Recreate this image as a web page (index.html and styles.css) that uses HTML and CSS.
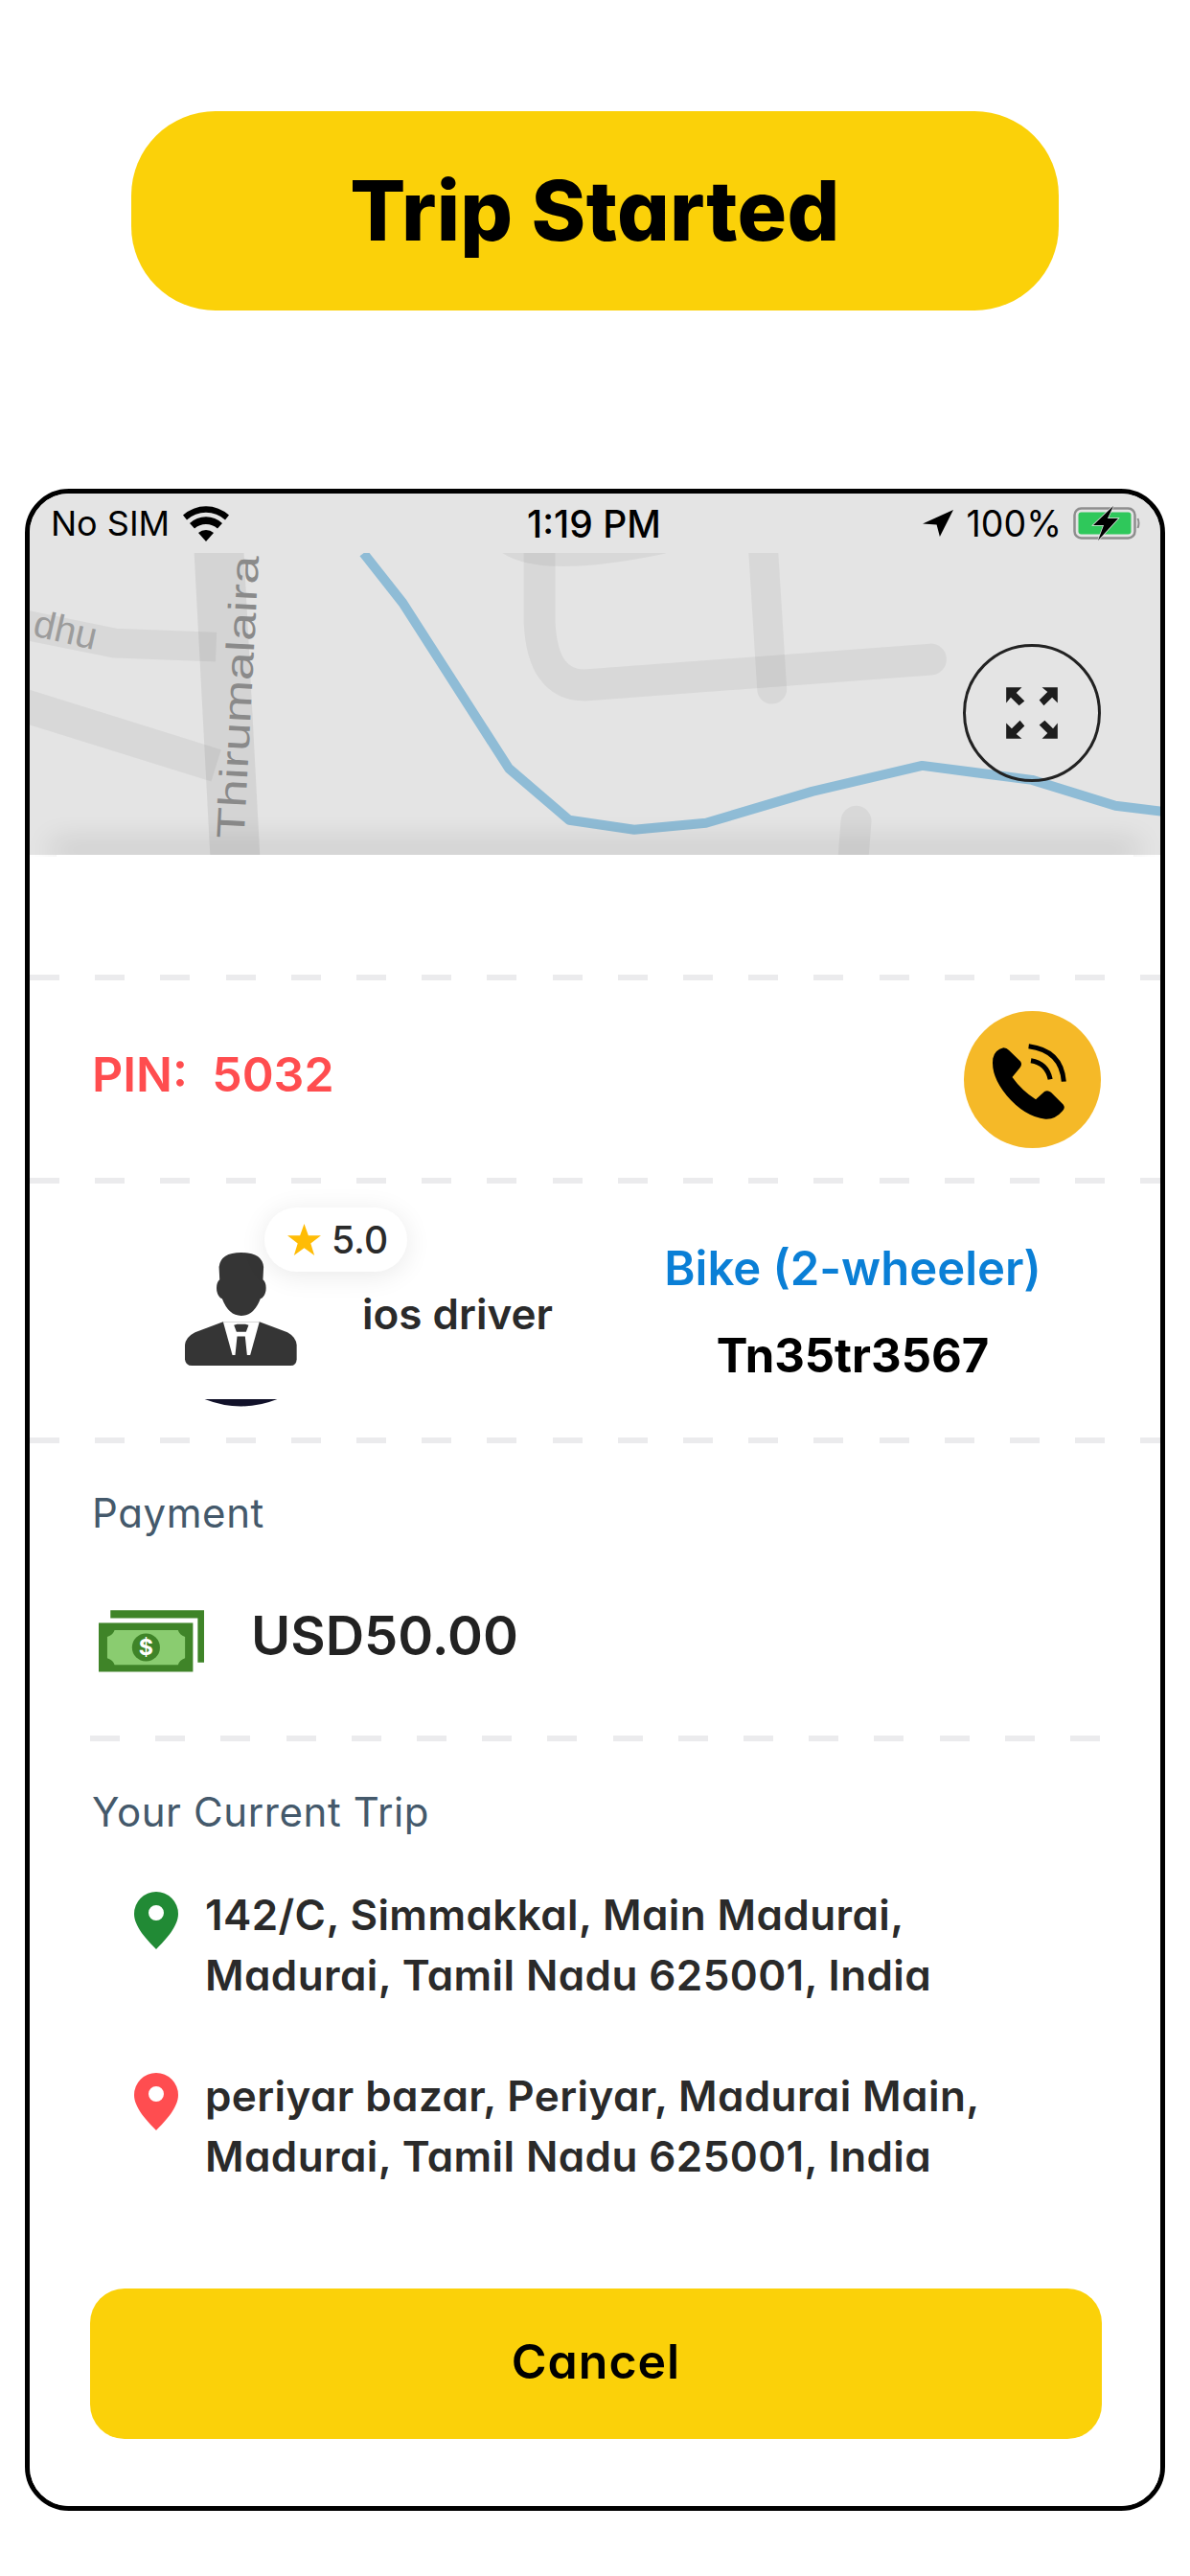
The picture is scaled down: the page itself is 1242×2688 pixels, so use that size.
FILE: index.html
```html
<!DOCTYPE html>
<html lang="en">
<head>
<meta charset="utf-8">
<title>Trip Started</title>
<link rel="stylesheet" href="styles.css">
</head>
<body>
<header class="banner"><h1 class="banner-text">Trip Started</h1></header>
<main class="phone">
  <div class="status">
    <div class="status-left">
      <span>No SIM</span>
      <svg class="wifi" viewBox="0 0 48 38"><path d="M24 38 16 29a12 12 0 0 1 16 0Z"/><path d="M12 24.500 7 19a25 25 0 0 1 34 0l-5 5.500a18 18 0 0 0-24 0Z"/><path d="M4 15.500 0 10.500a36 36 0 0 1 48 0l-4 5a30 30 0 0 0-40 0Z"/></svg>
    </div>
    <div class="status-time">1:19 PM</div>
    <div class="status-right">
      <svg class="arrow" viewBox="0 0 34 30"><path d="M34 0 0 15.500l15.500 1L19 30Z"/></svg>
      <span class="pct">100%</span>
      <svg class="battery" viewBox="0 0 70 36"><rect x="1.500" y="2.500" width="63" height="31" rx="7" fill="none" stroke="#8e8e8e" stroke-width="2.500"/><rect x="5.500" y="6.500" width="55" height="23" rx="3" fill="#2fc85b"/><path d="M67.500 13q2 5 0 10" fill="none" stroke="#8e8e8e" stroke-width="2"/><path class="bolt" d="M42 0 21 20h11l-6 16 21-23H36Z"/></svg>
    </div>
  </div>
  <div class="map">
    <svg class="map-art" viewBox="30 578 1182 315">
      <g fill="none" stroke-linecap="round" stroke-linejoin="round" class="roads">
        <path d="M530 566Q565 592 690 566" stroke-width="26"/>
        <path d="M563 560V650Q566 716 610 716L972 689" stroke-width="33"/>
        <path d="M796 560L806 720" stroke-width="31"/>
        <path d="M890 910L894 858" stroke-width="32"/>
        <path d="M20 652 119 672 225 676" stroke-width="31" stroke-linecap="butt"/>
        <path d="M20 736 225 800" stroke-width="35" stroke-linecap="butt"/>
      </g>
      <path class="road-main" d="M227 560 245 900" stroke-width="52" fill="none"/>
      <text class="map-label" transform="translate(254 877) rotate(-87) scale(1.300 1)">Thirumalaira</text>
      <text class="map-label-small" transform="translate(32 664) rotate(13)">dhu</text>
      <path class="route" d="M379 578 420 630 531 803 594 857 662 867 737 860 848 827 963 800 1078 815 1165 842 1215 848" fill="none" stroke-linejoin="round"/>
    </svg>
    <button class="expand" type="button" aria-label="Expand map">
      <svg viewBox="0 0 144 144"><g transform="translate(72 72)" fill="#1d1d1d"><path d="M-28-28H-11L-17-22-8-13-14-8-23-17-28-11Z"/><path transform="rotate(90)" d="M-28-28H-11L-17-22-8-13-14-8-23-17-28-11Z"/><path transform="rotate(180)" d="M-28-28H-11L-17-22-8-13-14-8-23-17-28-11Z"/><path transform="rotate(270)" d="M-28-28H-11L-17-22-8-13-14-8-23-17-28-11Z"/></g></svg>
    </button>
  </div>
  <section class="sheet">
    <div class="dash"></div>
    <div class="pin-row">
      <div class="pin-code">PIN:&nbsp; 5032</div>
      <svg class="call" viewBox="82 78 425 425"><circle cx="294.500" cy="290.500" r="212.500" fill="#f5b928"/><path d="M172 225Q178 198 205 192 215 192 222 200L258 235Q264 245 255 255L232 283Q262 325 305 352L332 328Q342 322 352 330L390 368Q398 378 388 388 365 415 335 413 270 405 215 340 165 280 172 225Z"/><path d="M283 187Q385 200 392 297M290 232Q340 240 350 290" fill="none" stroke="#000" stroke-width="15"/></svg>
    </div>
    <div class="dash"></div>
    <div class="driver-row">
      <div class="driver">
        <svg class="avatar" viewBox="98 200 352 490">
          <path fill="#353535" d="M275 200Q210 200 205 245L207 285Q195 295 198 320 202 340 215 345 235 398 275 398 315 398 335 345 348 340 352 320 355 295 343 285L345 245Q340 200 275 200Z"/>
          <path fill="#353535" d="M218 417 130 450Q100 465 98 490V535Q100 555 120 555H430Q448 555 449 535V490Q447 465 420 450L332 417Z"/>
          <path fill="#fff" d="M218 417H332L303 522H247Z"/>
          <path fill="#353535" d="M252 428 262 425H288L298 428 290 449H260ZM262 463H287L294 530H255Z"/>
          <path fill="#12122a" d="M160 660H388Q275 705 160 660Z"/>
        </svg>
        <div class="rating">
          <svg class="star" viewBox="0 0 36 34"><path fill="#ffbc05" d="M18 0 22.500 12.500H36L25 21 29 34 18 26 7 34 11 21 0 12.500H13.500Z"/></svg>
          <span>5.0</span>
        </div>
        <div class="driver-name">ios driver</div>
      </div>
      <div class="vehicle">
        <div class="vehicle-type">Bike (2-wheeler)</div>
        <div class="vehicle-plate">Tn35tr3567</div>
      </div>
    </div>
    <div class="dash"></div>
    <div class="payment">
      <div class="label">Payment</div>
      <div class="amount-row">
        <svg class="money" viewBox="188 420 332 195">
          <path fill="#3f8428" d="M225 420H520V585H500V445H225Z"/>
          <rect x="188" y="460" width="297" height="154" fill="#3f8428"/>
          <path fill="#8acc70" d="M238 483H438Q442 498 460 504V571Q442 577 438 592H238Q234 577 215 571V504Q234 498 238 483Z"/>
          <circle cx="337" cy="537" r="44" fill="#3f8428"/>
          <text class="money-sign" x="337" y="562" text-anchor="middle">$</text>
        </svg>
        <div class="amount">USD50.00</div>
      </div>
    </div>
    <div class="dash dash-inset"></div>
    <div class="trip">
      <div class="label">Your Current Trip</div>
      <div class="stop stop-first">
        <svg class="pin pin-green" viewBox="0 0 46 60"><path fill-rule="evenodd" d="M23 0A23 23 0 0 1 46 23C46 36 33 50 23 60 13 50 0 36 0 23A23 23 0 0 1 23 0ZM23 14a8 8 0 1 0 0 16 8 8 0 0 0 0-16Z"/></svg>
        <p class="address">142/C, Simmakkal, Main Madurai,<br>Madurai, Tamil Nadu 625001, India</p>
      </div>
      <div class="stop">
        <svg class="pin pin-red" viewBox="0 0 46 60"><path fill-rule="evenodd" d="M23 0A23 23 0 0 1 46 23C46 36 33 50 23 60 13 50 0 36 0 23A23 23 0 0 1 23 0ZM23 14a8 8 0 1 0 0 16 8 8 0 0 0 0-16Z"/></svg>
        <p class="address">periyar bazar, Periyar, Madurai Main,<br>Madurai, Tamil Nadu 625001, India</p>
      </div>
    </div>
    <button class="cancel" type="button">Cancel</button>
  </section>
</main>
</body>
</html>
```
FILE: styles.css
```css
* { box-sizing: border-box; }
html, body { margin: 0; padding: 0; background: #fff; }
body {
  width: 1242px;
  height: 2688px;
  overflow: hidden;
  font-family: Inter, "Liberation Sans", sans-serif;
  font-feature-settings: "cv11";
  color: #2a2a2a;
}
.banner {
  width: 968px;
  height: 208px;
  margin: 116px 0 0 137px;
  border-radius: 88px;
  background: #fbd109;
  display: flex;
  align-items: center;
  justify-content: center;
}
.banner-text {
  margin: 0;
  font-size: 86px;
  font-weight: 800;
  color: #000;
  letter-spacing: 0.3px;
}
.phone {
  width: 1190px;
  height: 2110px;
  margin: 186px 0 0 26px;
  border: 5px solid #000;
  border-radius: 46px;
  overflow: hidden;
  display: flex;
  flex-direction: column;
  background: #fff;
}
.status {
  height: 62px;
  flex: none;
  background: #e4e4e4;
  display: flex;
  align-items: center;
  justify-content: space-between;
  padding: 0 21px 0 22px;
  color: #000;
  font-size: 36px;
  font-family: Inter, sans-serif;
  position: relative;
}
.status-left, .status-right { display: flex; align-items: center; }
.status-left { gap: 14px; }
.status-time { position: absolute; left: 519px; font-size: 39px; font-weight: 500; }
.wifi { width: 48px; height: 38px; }
.arrow { width: 32px; height: 30px; }
.pct { margin: 0 12px 0 14px; font-size: 37.500px; }
.battery { width: 70px; height: 36px; }
.bolt { fill: #000; stroke: #e4e4e4; stroke-width: 1.500px; paint-order: stroke; }
.map {
  height: 315px;
  flex: none;
  background: #e4e4e4;
  position: relative;
}
.map-art { display: block; width: 100%; height: 100%; }
.roads { stroke: rgba(0, 0, 0, 0.05); }
.road-main { stroke: rgba(0, 0, 0, 0.065); }
.route { stroke: #8fbcd6; stroke-width: 10px; }
.map-label { font: 41px "Liberation Sans", sans-serif; fill: #8a8a8a; }
.map-label-small { font: 40px "Liberation Sans", sans-serif; fill: #9c9c9c; }
.expand {
  position: absolute;
  left: 974px;
  top: 95px;
  width: 144px;
  height: 144px;
  padding: 0;
  border: 3px solid #222;
  border-radius: 50%;
  background: transparent;
}
.expand svg { display: block; width: 100%; height: 100%; }
.sheet {
  flex: 1;
  position: relative;
  background: #fff;
  display: flex;
  flex-direction: column;
  padding-top: 125px;
}
.sheet::before {
  content: "";
  position: absolute;
  left: 28px;
  right: 28px;
  top: 0;
  height: 2px;
  box-shadow: 0 -6px 30px 5px rgba(0, 0, 0, 0.2);
  clip-path: inset(-60px -60px 0 -60px);
}
.dash {
  height: 6px;
  flex: none;
  background: repeating-linear-gradient(90deg, #ebebed 0 31px, transparent 31px 68.200px);
}
.dash-inset { margin: 0 62px 0 63px; }
.pin-row {
  height: 206px;
  flex: none;
  display: flex;
  align-items: center;
  justify-content: space-between;
  padding: 0 62px 0 65px;
}
.pin-code { font-size: 50px; font-weight: 600; color: #ff4d4f; margin-bottom: 10px; }
.call { width: 143px; height: 143px; fill: #000; }
.driver-row {
  height: 265px;
  flex: none;
  display: flex;
  align-items: flex-start;
  justify-content: space-between;
  padding-right: 121px;
}
.driver { position: relative; width: 560px; height: 100%; }
.avatar { position: absolute; left: 162px; top: 72px; width: 117px; height: 163px; }
.rating {
  position: absolute;
  left: 245px;
  top: 25px;
  width: 149px;
  height: 67px;
  border-radius: 34px;
  background: #fff;
  box-shadow: 0 4px 28px rgba(0, 0, 0, 0.09);
  display: flex;
  align-items: center;
  gap: 11px;
  padding-left: 24px;
  font-size: 39px;
  font-weight: 500;
}
.star { width: 35px; height: 33px; }
.driver-name {
  position: absolute;
  left: 347px;
  top: 109px;
  font-size: 44px;
  font-weight: 600;
  white-space: nowrap;
}
.vehicle {
  width: 400px;
  display: flex;
  flex-direction: column;
  align-items: center;
  padding-top: 59px;
  gap: 32px;
}
.vehicle-type { font-size: 49px; font-weight: 600; color: #0a7fd6; white-space: nowrap; }
.vehicle-plate { font-size: 49px; font-weight: 700; color: #000; white-space: nowrap; }
.payment { height: 305px; flex: none; padding: 49px 62px 0 65px; }
.label { font-size: 42px; line-height: 48px; color: #44596b; letter-spacing: 0.6px; }
.amount-row { display: flex; align-items: center; margin-top: 65px; padding-left: 7px; }
.money { width: 110px; height: 65px; flex: none; margin-top: 12px; }
.money-sign { font: 700 70px Inter, sans-serif; fill: #fff; }
.amount { margin-left: 49px; font-size: 56px; font-weight: 600; color: #222; }
.trip { height: 571px; flex: none; padding: 50px 62px 0 65px; }
.stop { display: flex; align-items: flex-start; gap: 28px; padding-left: 44px; margin-top: 67px; }
.stop-first { margin-top: 56px; }
.pin { width: 46px; height: 60px; flex: none; margin-top: 3px; }
.pin-green { fill: #218a35; }
.pin-red { fill: #ff4d50; }
.address { margin: -4px 0 0; font-size: 44px; line-height: 63px; font-weight: 600; letter-spacing: 0.4px; white-space: nowrap; }
.cancel {
  width: 1056px;
  height: 157px;
  margin-left: 63px;
  padding: 0 0 5px;
  border: 0;
  border-radius: 36px;
  background: #fbd109;
  font: 600 50px Inter, sans-serif;
  font-feature-settings: "cv11";
  color: #000;
  letter-spacing: 1px;
}
```
